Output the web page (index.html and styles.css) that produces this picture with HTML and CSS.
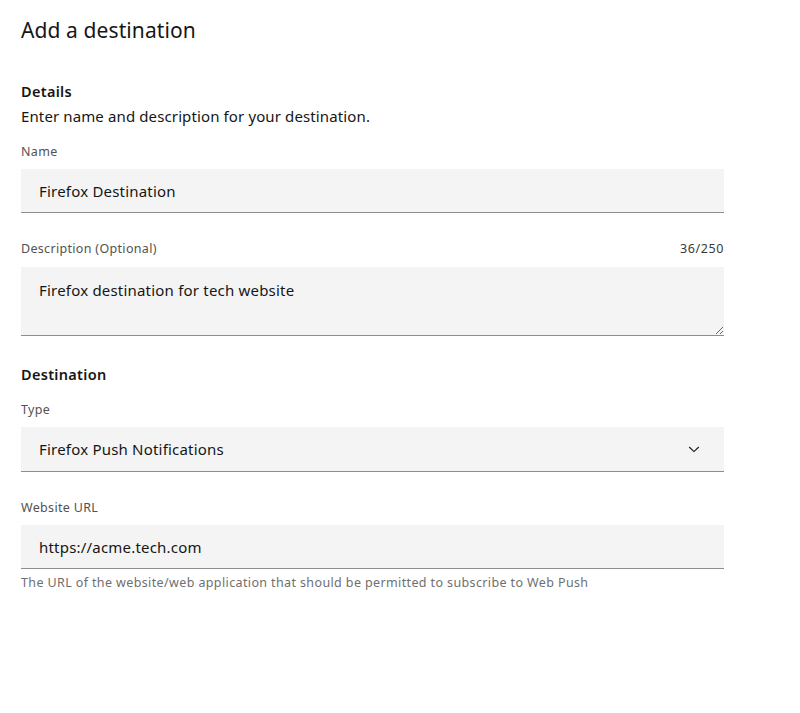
FILE: index.html
```html
<!DOCTYPE html>
<html lang="en">
<head>
<meta charset="utf-8">
<title>Add a destination</title>
<link rel="stylesheet" href="styles.css">
</head>
<body>
<main class="page">
  <h1 class="title">Add a destination</h1>

  <section class="section section-details">
    <h2 class="heading">Details</h2>
    <p class="intro">Enter name and description for your destination.</p>

    <div class="field field-first">
      <label class="label" for="name">Name</label>
      <input class="input" id="name" type="text" value="Firefox Destination">
    </div>

    <div class="field">
      <div class="label-row">
        <label class="label" for="desc">Description (Optional)</label>
        <span class="counter">36/250</span>
      </div>
      <textarea class="textarea" id="desc">Firefox destination for tech website</textarea>
    </div>
  </section>

  <section class="section section-dest">
    <h2 class="heading">Destination</h2>

    <div class="field field-type">
      <label class="label" for="type">Type</label>
      <div class="select">
        <span class="select-value">Firefox Push Notifications</span>
        <svg class="chevron" width="16" height="16" viewBox="0 0 16 16" aria-hidden="true"><path d="M3.2 6 L8 10.6 L12.8 6" fill="none" stroke="#161616" stroke-width="1.1"/></svg>
      </div>
    </div>

    <div class="field">
      <label class="label" for="url">Website URL</label>
      <input class="input" id="url" type="text" value="https://acme.tech.com">
      <div class="helper">The URL of the website/web application that should be permitted to subscribe to Web Push</div>
    </div>
  </section>
</main>
</body>
</html>
```

FILE: styles.css
```css
* { box-sizing: border-box; }

html, body {
  margin: 0;
  padding: 0;
  background: #ffffff;
}

body {
  font-family: "Noto Sans", "Open Sans", sans-serif;
  color: #161616;
}

.page {
  width: 703px;
  margin-left: 21px;
  padding-top: 16px;
}

.title {
  margin: 0;
  font-size: 21px;
  line-height: 28px;
  font-weight: 400;
  color: #161616;
  letter-spacing: 0.1px;
}

.section-details {
  margin-top: 37px;
}

.section-dest {
  margin-top: 28px;
}

.heading {
  margin: 0;
  font-size: 14.5px;
  line-height: 20px;
  font-weight: 600;
  letter-spacing: 0.3px;
  color: #161616;
}

.intro {
  margin: 4px 0 0;
  font-size: 15px;
  line-height: 22px;
  color: #161616;
  letter-spacing: 0.12px;
}

.field {
  margin-top: 28px;
  display: flex;
  flex-direction: column;
}

.field-first { margin-top: 17px; }
.field-type { margin-top: 18px; }

.label-row {
  display: flex;
  justify-content: space-between;
  align-items: center;
}

.label {
  display: block;
  font-size: 12.5px;
  line-height: 16px;
  color: #525252;
  letter-spacing: 0.32px;
  margin-bottom: 9px;
}

.label-row .label { margin-bottom: 10px; }

.counter {
  font-size: 12.5px;
  line-height: 16px;
  color: #393939;
  letter-spacing: 0.6px;
  margin-bottom: 10px;
}

.input,
.textarea,
.select {
  width: 100%;
  background: #f4f4f4;
  border: none;
  border-bottom: 1px solid #8d8d8d;
  border-radius: 0;
  font-family: inherit;
  font-size: 15px;
  color: #161616;
  letter-spacing: 0.2px;
  outline: none;
}

.input {
  height: 44px;
  padding: 0 18px;
}

.textarea {
  height: 69px;
  padding: 12px 18px;
  line-height: 22px;
  resize: vertical;
  display: block;
}

.select {
  height: 45px;
  padding: 0 22px 0 18px;
  display: flex;
  align-items: center;
  justify-content: space-between;
}

.chevron {
  display: block;
  flex: none;
}

.helper {
  margin-top: 6px;
  font-size: 12.5px;
  line-height: 16px;
  color: #6f6f6f;
  letter-spacing: 0.38px;
}
```
